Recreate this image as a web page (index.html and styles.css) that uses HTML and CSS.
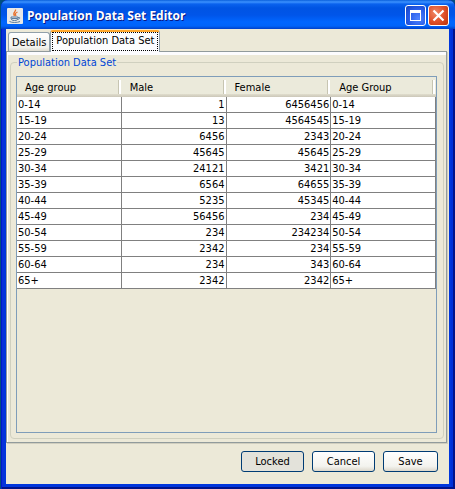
FILE: index.html
```html
<!DOCTYPE html>
<html lang="en">
<head>
<meta charset="utf-8">
<title>Population Data Set Editor</title>
<link rel="stylesheet" href="styles.css">
</head>
<body>
<div class="window">
  <header class="titlebar">
    <svg class="app-icon" viewBox="0 0 16 16" aria-hidden="true">
      <rect width="16" height="16" rx="1" fill="#e9e9e7"/>
      <path d="M8.5 1.5C9.5 3.5 5 4.500 7.500 8M10.500 4C8 5 8 6 9 8" fill="none" stroke="#e8702a" stroke-width="1.300"/>
      <path d="M4 9h7c0 3-1 3.500-3.500 3.500S4 12 4 9zM11 9.500c2.500-.8 2.500 1.500-.5 2" fill="none" stroke="#5a7c9e"/>
      <path d="M4.500 10.500h6M2.500 13.500c2 1.300 8 1.300 10.500 0" fill="none" stroke="#5a7c9e"/>
    </svg>
    <h1>Population Data Set Editor</h1>
    <button class="caption-button maximize" aria-label="Maximize">
      <svg viewBox="0 0 19 19" aria-hidden="true"><path d="M4 4h11v11H4zM5 7v7h9V7z" fill="#fff" fill-rule="evenodd"/></svg>
    </button>
    <button class="caption-button close" aria-label="Close">
      <svg viewBox="0 0 19 19" aria-hidden="true"><path d="M4.500 4.500l10 10M14.500 4.500l-10 10" stroke="#fff" stroke-width="2.200"/></svg>
    </button>
  </header>
  <main class="content">
    <div class="tabs" role="tablist">
      <button class="tab" role="tab" aria-selected="false">Details</button>
      <button class="tab selected" role="tab" aria-selected="true"><span>Population Data Set</span></button>
    </div>
    <section class="panel">
      <fieldset class="group">
        <legend>Population Data Set</legend>
        <div class="scroll">
          <table>
            <thead><tr><th>Age group</th><th>Male</th><th>Female</th><th>Age Group</th></tr></thead>
            <tbody>
              <tr><td>0-14</td><td class="num">1</td><td class="num">6456456</td><td>0-14</td></tr>
              <tr><td>15-19</td><td class="num">13</td><td class="num">4564545</td><td>15-19</td></tr>
              <tr><td>20-24</td><td class="num">6456</td><td class="num">2343</td><td>20-24</td></tr>
              <tr><td>25-29</td><td class="num">45645</td><td class="num">45645</td><td>25-29</td></tr>
              <tr><td>30-34</td><td class="num">24121</td><td class="num">3421</td><td>30-34</td></tr>
              <tr><td>35-39</td><td class="num">6564</td><td class="num">64655</td><td>35-39</td></tr>
              <tr><td>40-44</td><td class="num">5235</td><td class="num">45345</td><td>40-44</td></tr>
              <tr><td>45-49</td><td class="num">56456</td><td class="num">234</td><td>45-49</td></tr>
              <tr><td>50-54</td><td class="num">234</td><td class="num">234234</td><td>50-54</td></tr>
              <tr><td>55-59</td><td class="num">2342</td><td class="num">234</td><td>55-59</td></tr>
              <tr><td>60-64</td><td class="num">234</td><td class="num">343</td><td>60-64</td></tr>
              <tr><td>65+</td><td class="num">2342</td><td class="num">2342</td><td>65+</td></tr>
            </tbody>
          </table>
        </div>
      </fieldset>
    </section>
    <footer class="actions">
      <button class="action locked">Locked</button>
      <button class="action">Cancel</button>
      <button class="action save">Save</button>
    </footer>
  </main>
</div>
</body>
</html>
```
FILE: styles.css
```css
* { box-sizing: border-box; }

body {
  margin: 0;
  background: #004e80;
  color: #000;
  font: 11px/15px "DejaVu Sans Condensed", "Noto Sans", sans-serif;
}

button { font: inherit; color: inherit; }

.window {
  display: flex;
  flex-direction: column;
  height: 100vh;
  margin-left: 1px;
  padding: 0 6px 5px 5px;
  border-radius: 7px 7px 0 0;
  background: #0036dc;
  box-shadow: inset 1px 0 #0019cf, inset -2px 0 #00138c, inset 0 -2px #00138c, inset 3px 0 #0831d9, inset -4px 0 #0030d8;
}

.titlebar {
  display: flex;
  align-items: center;
  flex: none;
  height: 29px;
  margin: 0 -6px 0 -5px;
  padding: 2px 6px 0 6px;
  border-radius: 7px 7px 0 0;
  background: linear-gradient(#0a60dc 0, #3c92ff 2px, #0a62ee 4px, #0054e3 8px, #0055e9 15px, #0066ff 22px, #0064fa 26px, #0040c8 29px);
}

.app-icon { width: 16px; height: 16px; margin-right: 4px; }

h1 {
  flex: 1;
  margin: 0;
  color: #fff;
  font: bold 12px/18px "Open Sans", "Noto Sans", sans-serif;
  text-shadow: 1px 1px #0a1883;
}

.caption-button {
  width: 21px;
  height: 21px;
  margin-left: 2px;
  padding: 0;
  border: 1px solid #fff;
  border-radius: 3px;
}

.caption-button svg { display: block; width: 19px; height: 19px; }
.maximize { background: radial-gradient(circle at 65% 65%, #4f84ff, #2458e4 60%, #1743bd); }
.close { background: radial-gradient(circle at 35% 35%, #f08a68, #e0522c 50%, #bd3208); }

.content {
  display: flex;
  flex: 1;
  flex-direction: column;
  min-height: 0;
  padding: 1px 2px 0 0;
  background: #ece9d8;
}

.tabs { display: flex; align-items: flex-end; height: 21px; padding-left: 2px; }

.tab {
  height: 19px;
  padding: 0 3px;
  border: 1px solid #91a0aa;
  border-bottom: 0;
  border-radius: 3px 3px 0 0;
  background: linear-gradient(#fff, #f1f1ec 80%, #dedccf);
}

.tab.selected {
  z-index: 1;
  height: 22px;
  margin-bottom: -1px;
  padding: 0 1px 1px;
  border-top: 2px solid #ffa82e;
  background: #fcfcfe;
}

.tab.selected span {
  display: block;
  height: 19px;
  padding: 0 3px;
  border: 1px dotted #000;
}

.panel {
  display: flex;
  flex: 1;
  min-height: 0;
  padding: 3px 2px 3px 3px;
  border: 1px solid #919b9c;
  background: linear-gradient(#fcfcfe 3px, #ece9d8 3px);
  box-shadow: inset 1px 0 #fff, 1px 1px #d0cebf;
}

.group {
  display: flex;
  flex: 1;
  min-width: 0;
  margin: 0;
  padding: 6px 6px 5px 5px;
  border: 1px solid #d0d0bf;
  border-radius: 4px;
}

legend { margin-left: 1px; padding: 0 1px; color: #0046d5; }

.scroll { flex: 1; overflow: hidden; border: 1px solid #7f9db9; }

table { width: 100%; table-layout: fixed; border-spacing: 0; }

th {
  position: relative;
  height: 20px;
  padding: 0 8px;
  background: linear-gradient(#ebeadb 17px, #e0ddcd 17px, #cbc7b8 20px);
  font-weight: normal;
  text-align: left;
}

th::after {
  content: "";
  position: absolute;
  top: 3px;
  right: 1px;
  width: 2px;
  height: 14px;
  border-left: 1px solid #c7c5b2;
  background: #fff;
}

td {
  height: 16px;
  padding: 0 1px;
  border-right: 1px solid #808080;
  border-bottom: 1px solid #808080;
  background: #fff;
}

.num { text-align: right; }

.actions {
  display: flex;
  flex: none;
  justify-content: flex-end;
  gap: 8px;
  padding: 8px 9px 12px;
}

.action {
  width: 63px;
  height: 21px;
  padding: 0;
  border: 1px solid #003c74;
  border-radius: 3px;
  background: linear-gradient(#fff, #f3f3ee 75%, #dcd7cb);
}

.save { width: 55px; }
.locked { background: #e3e2da; }
```
